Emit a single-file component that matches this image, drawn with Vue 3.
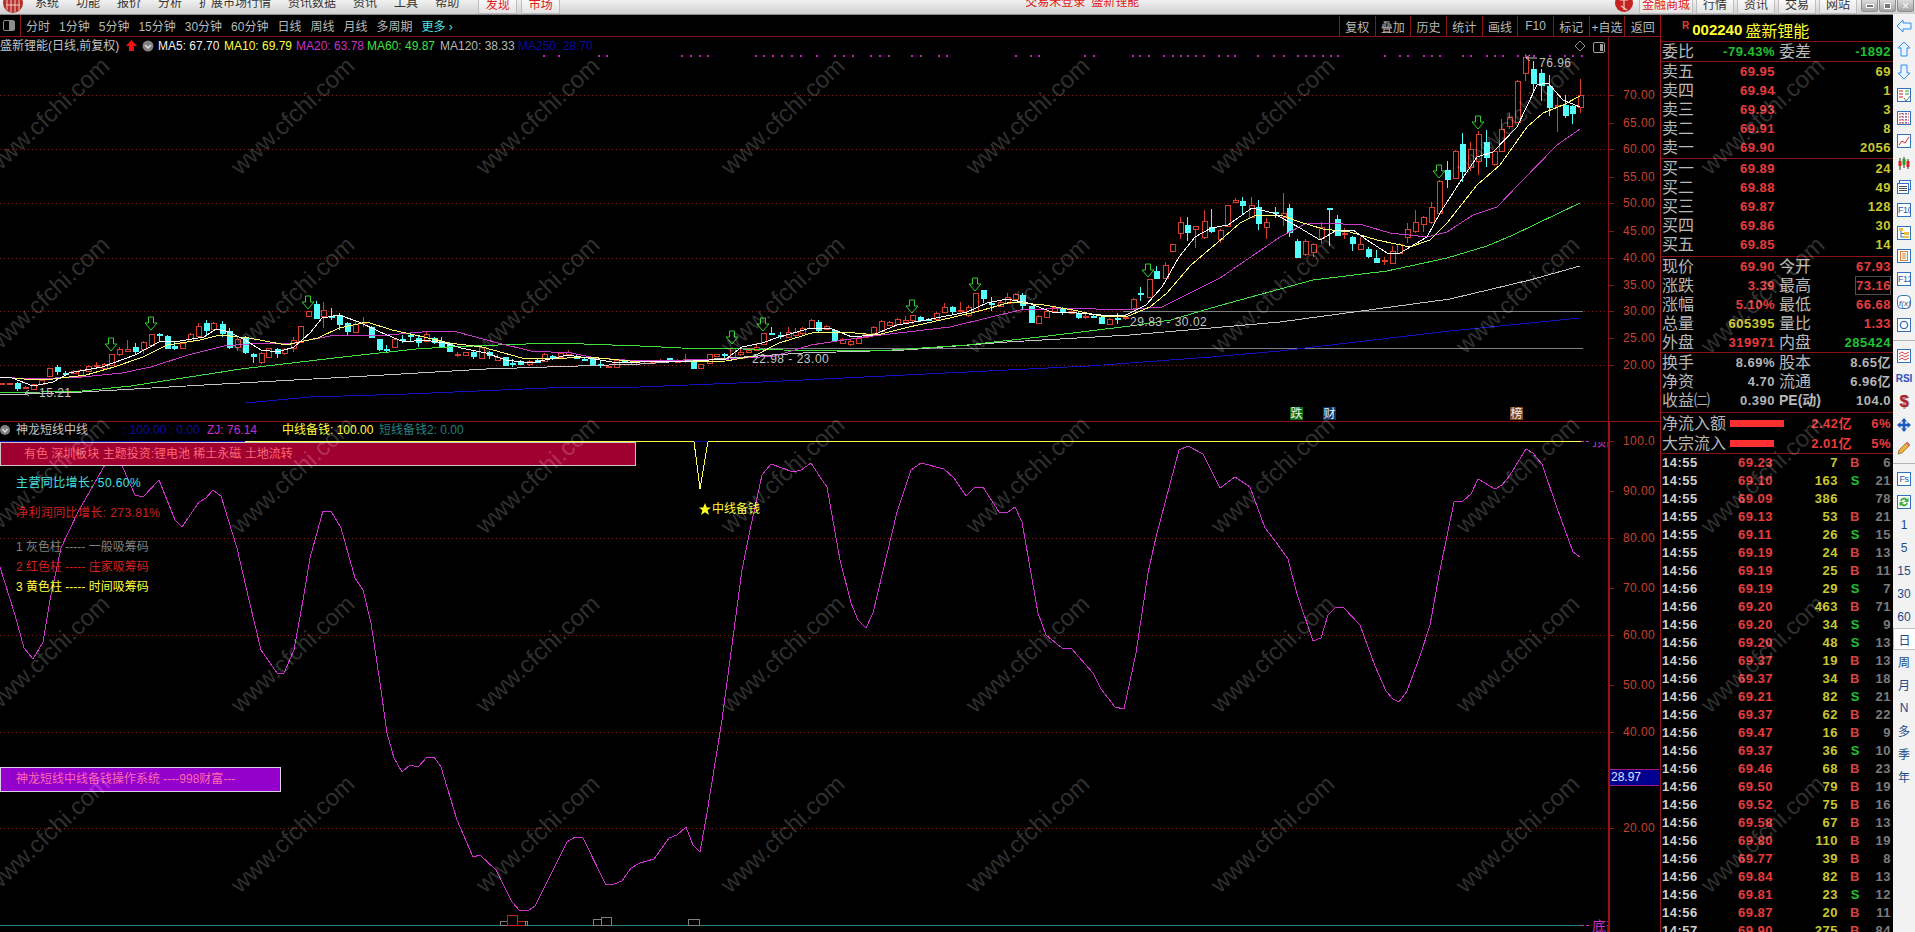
<script setup>
const menus = ['系统', '功能', '报价', '分析', '扩展市场行情', '资讯数据', '资讯', '工具', '帮助']
const tabs = ['分时', '1分钟', '5分钟', '15分钟', '30分钟', '60分钟', '日线', '周线', '月线', '多周期']
const tools = ['复权', '叠加', '历史', '统计', '画线', 'F10', '标记', '+自选', '返回']

const C = [[1,383,384,383,384,0],[9,383,384,383,384,0],[17,383,388,382,391,1],[25,387,388,386,389,0],[33,384,389,384,390,0],[41,380,384,379,385,0],[49,368,376,368,377,0],[57,367,371,365,375,1],[65,373,374,371,376,1],[73,371,373,370,374,0],[80,370,376,369,377,0],[88,366,371,365,372,0],[96,365,366,362,367,0],[104,364,368,363,369,0],[111,354,365,354,366,0],[119,349,354,347,356,0],[127,349,351,340,352,0],[135,347,351,343,355,1],[143,342,349,341,354,0],[151,334,345,334,346,0],[159,334,335,333,342,1],[167,336,348,335,349,1],[174,346,348,342,350,1],[182,343,348,342,349,0],[190,334,341,333,342,0],[198,326,336,323,338,0],[206,323,330,320,335,1],[213,323,329,322,331,0],[222,324,333,321,337,1],[229,331,347,328,349,1],[237,339,347,337,351,0],[245,337,352,336,354,1],[253,354,356,353,363,1],[261,353,362,352,364,0],[268,348,357,348,358,0],[277,349,353,348,358,1],[284,349,353,348,355,0],[293,340,348,337,352,0],[300,326,342,326,343,0],[308,311,316,311,316,0],[316,304,318,301,319,1],[323,310,316,302,328,0],[331,316,317,308,320,1],[339,315,324,313,330,1],[347,323,331,322,335,1],[355,324,332,321,333,0],[363,322,323,317,327,0],[371,327,337,326,338,1],[379,339,349,339,351,1],[386,349,350,345,352,1],[394,339,347,338,348,0],[402,339,340,335,343,1],[410,335,336,332,342,1],[418,338,342,335,347,1],[426,334,341,331,342,0],[434,338,342,337,344,1],[441,341,347,337,348,1],[449,343,351,342,352,1],[457,354,355,352,357,0],[465,352,355,352,356,0],[473,352,356,351,359,1],[481,347,358,346,359,0],[489,352,355,351,359,1],[497,357,360,354,361,0],[505,357,365,357,366,1],[512,363,364,359,367,1],[520,361,364,360,365,1],[529,361,364,360,366,0],[537,360,362,359,363,1],[544,354,361,353,362,0],[552,356,358,355,360,1],[560,353,357,352,358,0],[568,352,354,350,355,0],[576,357,358,355,359,1],[584,359,360,358,361,1],[592,358,365,357,366,1],[600,364,365,361,368,1],[608,366,367,365,368,0],[616,360,367,359,368,0],[624,361,362,360,363,1],[633,360,364,360,365,0],
[641,361,363,360,364,0],[652,362,363,361,364,0],[660,360,362,359,363,0],[669,358,361,358,362,1],[677,360,362,359,363,0],[685,359,360,354,363,0],[693,362,368,361,369,1],[700,364,368,364,369,0],[709,354,363,354,364,0],[716,354,356,354,357,0],[724,354,355,353,358,1],[732,348,357,348,358,0],[740,352,354,349,356,0],[748,350,352,348,353,0],[756,347,350,343,351,0],[763,333,344,333,345,0],[771,333,334,327,335,1],[780,335,336,332,339,1],[788,332,337,327,338,0],[795,332,335,328,338,0],[802,328,333,327,336,0],[811,320,328,319,329,0],[818,322,330,320,332,1],[826,326,329,325,330,0],[834,330,340,329,341,1],[842,339,343,338,344,0],[850,341,344,340,346,0],[858,338,343,337,344,0],[865,334,337,333,338,0],[873,327,333,326,334,0],[881,321,331,320,332,0],[889,322,325,321,326,0],[897,319,324,318,325,0],[905,320,322,316,324,0],[912,315,320,315,324,0],[920,317,320,316,322,1],[928,319,320,318,321,1],[936,313,319,312,320,0],[944,307,312,303,313,0],[952,307,311,306,315,1],[960,310,311,302,313,0],[968,307,315,305,317,0],[975,293,311,293,312,0],[983,290,298,290,303,1],[991,303,304,297,311,1],[1000,302,306,301,307,0],[1007,297,303,293,304,0],[1015,294,299,293,300,0],[1022,295,305,293,310,1],[1031,306,322,306,322,1],[1038,316,323,315,324,0],[1046,311,317,308,318,0],[1054,307,311,306,312,0],[1062,308,312,307,315,1],[1071,311,313,310,314,0],[1078,313,317,312,319,1],[1085,316,317,313,319,0],[1093,316,317,314,318,1],[1101,317,323,316,324,1],[1109,319,324,318,325,0],[1117,318,319,313,324,1],[1125,317,318,314,320,0],[1133,299,309,298,310,0],[1140,293,294,287,301,1],[1149,279,297,279,298,0],[1156,271,278,266,279,1],[1165,265,278,262,279,0],[1172,244,251,244,252,0],[1180,222,233,217,239,0],[1187,225,232,217,241,1],[1195,226,229,226,248,0],[1204,221,237,210,239,0],[1211,227,231,209,233,1],[1220,230,239,229,243,0],[1227,205,226,205,227,0],[1235,200,202,198,203,0],[1242,201,205,197,214,1],[1251,205,217,197,218,0],[1258,207,223,200,230,1],[1266,222,227,218,239,0],[1275,212,213,207,218,1],
[1283,213,217,193,226,0],[1289,208,232,204,237,1],[1297,241,257,239,258,1],[1305,241,254,239,256,0],[1313,244,252,243,257,0],[1321,227,238,222,244,0],[1329,208,209,208,246,1],[1337,219,235,215,236,1],[1344,233,234,228,239,0],[1352,237,243,236,251,1],[1360,244,249,237,250,0],[1368,249,256,247,258,1],[1376,258,262,250,263,1],[1384,260,261,257,265,0],[1392,251,263,246,264,0],[1399,244,253,243,254,0],[1407,229,237,223,243,0],[1415,222,231,210,233,0],[1423,217,224,216,232,0],[1431,207,222,202,224,0],[1439,181,213,180,214,0],[1447,170,179,161,188,1],[1455,151,178,150,179,0],[1462,144,171,133,182,1],[1470,149,167,142,171,0],[1478,134,161,131,175,0],[1486,142,157,130,167,1],[1494,151,164,150,166,0],[1501,129,151,119,152,0],[1509,117,126,113,129,0],[1517,81,122,80,123,0],[1525,57,73,54,81,0],[1533,69,83,61,92,1],[1541,73,85,69,101,1],[1549,86,107,75,116,1],[1557,105,106,97,132,0],[1565,105,115,95,118,1],[1572,106,113,105,124,1],[1580,95,107,79,113,0]]

const candles = C.map(([x, t, b, h, l, c]) => ({ x, t, b, h, l, c }))

const pts = a => a.map(p => p.join(',')).join(' ')
const maLines = [
  { cls: 'ma250', p: pts([[245,403],[310,397],[408,394],[547,388],[640,387],[762,382],[967,372],[1089,366],[1211,357],[1280,351],[1450,331],[1580,318]]) },
  { cls: 'ma120', p: pts([[0,395],[82,392],[204,385],[367,376],[486,369],[640,364],[803,353],[905,350],[1007,342],[1130,335],[1280,322],[1450,299],[1530,280],[1580,266]]) },
  { cls: 'ma60', p: pts([[0,393],[82,391],[131,386],[241,369],[343,357],[416,349],[449,347],[498,345],[555,343],[640,346],[681,348],[742,349],[783,350],[877,351],[967,345],[1048,336],[1130,326],[1171,320],[1211,308],[1280,289],[1313,280],[1387,271],[1447,258],[1487,246],[1513,235],[1580,203]]) },
  { cls: 'ma20', p: pts([[0,377],[29,379],[82,377],[122,373],[151,367],[188,355],[224,346],[261,343],[294,343],[335,335],[388,335],[433,331],[457,332],[498,343],[531,351],[571,353],[596,358],[640,361],[730,359],[775,356],[811,345],[864,337],[950,327],[1020,310],[1073,308],[1118,310],[1162,307],[1220,278],[1280,237],[1307,223],[1343,224],[1363,225],[1390,233],[1427,237],[1447,232],[1473,215],[1497,207],[1520,183],[1557,145],[1580,129]]) },
  { cls: 'ma10', p: pts([[0,377],[24,379],[53,379],[86,375],[114,367],[143,357],[167,345],[200,340],[220,335],[249,338],[286,345],[318,338],[339,328],[367,322],[392,330],[424,337],[449,343],[482,347],[522,358],[547,359],[588,357],[640,362],[726,361],[754,356],[779,343],[815,332],[844,332],[877,335],[909,327],[950,318],[983,310],[1011,302],[1044,305],[1073,310],[1101,316],[1126,317],[1150,307],[1167,293],[1191,265],[1224,237],[1240,223],[1256,215],[1280,215],[1300,222],[1323,229],[1350,232],[1377,240],[1410,247],[1430,240],[1447,223],[1477,185],[1500,165],[1527,127],[1543,113],[1563,105],[1580,96]]) },
  { cls: 'ma5', p: pts([[0,377],[12,378],[33,386],[53,382],[69,373],[102,367],[135,355],[159,342],[180,341],[204,337],[216,329],[229,332],[245,340],[261,350],[278,352],[294,347],[310,333],[322,318],[339,315],[359,322],[380,332],[404,342],[424,340],[445,343],[461,348],[486,353],[506,360],[531,363],[555,358],[567,355],[588,358],[612,362],[640,362],[693,361],[726,359],[742,347],[762,343],[779,337],[811,328],[832,329],[852,337],[873,335],[897,325],[926,320],[967,312],[987,303],[1007,299],[1028,303],[1052,312],[1077,313],[1101,315],[1126,315],[1146,305],[1162,287],[1179,257],[1195,237],[1211,228],[1228,225],[1252,208],[1273,213],[1300,228],[1320,240],[1337,230],[1353,230],[1367,240],[1387,253],[1400,253],[1427,237],[1440,213],[1460,182],[1477,157],[1493,152],[1517,127],[1537,85],[1548,83],[1563,100],[1580,107]]) },
]
const zj = pts([[0,567],[15,615],[24,648],[33,659],[43,642],[50,600],[61,548],[78,512],[106,463],[110,461],[120,461],[135,495],[143,497],[159,480],[175,520],[182,527],[199,502],[206,498],[213,490],[221,496],[237,548],[249,600],[261,650],[277,673],[284,673],[294,650],[303,600],[310,558],[323,511],[331,511],[341,528],[355,578],[363,590],[371,623],[380,683],[387,733],[394,758],[402,772],[410,765],[418,767],[427,757],[434,757],[441,767],[457,820],[473,857],[480,855],[496,870],[512,902],[520,911],[529,910],[535,906],[567,842],[575,837],[583,838],[606,885],[614,884],[622,881],[631,868],[640,863],[654,859],[669,838],[677,835],[686,827],[693,845],[700,852],[707,813],[722,720],[742,570],[750,530],[762,475],[771,464],[793,472],[801,470],[811,463],[820,477],[827,487],[840,560],[851,603],[858,620],[866,628],[873,613],[897,512],[911,470],[921,463],[944,469],[954,478],[966,496],[975,487],[983,487],[999,512],[1007,513],[1015,507],[1022,522],[1038,613],[1046,635],[1062,648],[1071,648],[1093,673],[1101,689],[1115,707],[1124,709],[1136,653],[1148,573],[1156,537],[1179,450],[1188,446],[1203,454],[1220,488],[1235,477],[1250,487],[1265,528],[1273,538],[1288,559],[1297,594],[1313,641],[1321,638],[1328,615],[1335,608],[1343,607],[1360,625],[1375,666],[1386,691],[1393,699],[1399,702],[1407,691],[1420,656],[1430,625],[1440,570],[1454,502],[1463,501],[1471,494],[1478,479],[1495,489],[1502,485],[1510,475],[1526,449],[1533,453],[1542,464],[1557,508],[1573,552],[1580,557]])
const notch = pts([[245,441.5],[694,441.5],[700,489],[708,441.5],[1581,441.5]])

const arrows = [[111,345],[151,324],[308,303],[732,338],[763,325],[912,307],[975,285],[1148,271],[1439,172],[1478,123]]
const dots = [543,558,598,606,681,690,699,707,755,763,772,781,791,800,816,834,843,852,870,879,888,911,920,938,946,1015,1030,1038,1084,1093,1132,1139,1148,1163,1172,1180,1187,1195,1203,1218,1227,1234,1257,1273,1283,1297,1305,1313,1322,1330,1337,1384,1399,1407,1423,1431,1439,1462,1470,1486,1494,1502,1517,1525,1533,1549,1564,1572,1581]
const grid1 = [95, 149, 203, 258, 311, 365]
const grid2 = [538, 635, 732, 828]
const axis1 = [[95,'70.00'],[123,'65.00'],[149,'60.00'],[177,'55.00'],[203,'50.00'],[231,'45.00'],[258,'40.00'],[285,'35.00'],[311,'30.00'],[338,'25.00'],[365,'20.00']]
const axis2 = [[441,'100.0'],[491,'90.00'],[538,'80.00'],[588,'70.00'],[635,'60.00'],[685,'50.00'],[732,'40.00'],[828,'20.00']]
const legends = [
  { x: 158, cls: 'white', t: 'MA5: 67.70' },
  { x: 224, cls: 'yellow', t: 'MA10: 69.79' },
  { x: 296, cls: 'magenta', t: 'MA20: 63.78' },
  { x: 367, cls: 'green', t: 'MA60: 49.87' },
  { x: 440, cls: 'grey', t: 'MA120: 38.33' },
  { x: 518, cls: 'blue', t: 'MA250: 28.70' },
]
const notes = [
  { y: 483, cls: 'cyan wide', t: '主营同比增长:  50.60%' },
  { y: 513, cls: 'red wide', t: '净利润同比增长:  273.81%' },
  { y: 547, cls: 'dim', t: '1 灰色柱 ----- 一般吸筹码' },
  { y: 567, cls: 'red', t: '2 红色柱 -----  庄家吸筹码' },
  { y: 587, cls: 'yellow', t: '3 黄色柱 -----  时间吸筹码' },
]
const volBars = [[500,7,4,'grey'],[507,10,10,'red'],[517,8,4,'red'],[525,2,4,'grey'],[593,8,6,'grey'],[601,10,8,'grey'],[688,11,6,'grey']]
const marks = [[1290,'跌','m-green'],[1323,'财','m-blue'],[1510,'榜','m-brown']]

const sell = [['卖五','69.95','69'],['卖四','69.94','1'],['卖三','69.93','3'],['卖二','69.91','8'],['卖一','69.90','2056']]
const buy = [['买一','69.89','24'],['买二','69.88','49'],['买三','69.87','128'],['买四','69.86','30'],['买五','69.85','14']]
const quote = [
  ['现价','69.90','red','今开','67.93','red',false],
  ['涨跌','3.39','red','最高','73.16','red',true],
  ['涨幅','5.10%','red','最低','66.68','red',false],
  ['总量','605395','yel','量比','1.33','red',false],
  ['外盘','319971','red','内盘','285424','grn',false],
]
const stats = [['换手','8.69%','股本','8.65亿'],['净资','4.70','流通','6.96亿'],['收益㈡','0.390','PE(动)','104.0']]
const flows = [['净流入额',54,'2.42亿','6%'],['大宗流入',44,'2.01亿','5%']]
const trades = [['14:55','69.23','7','B','6'],['14:55','69.10','163','S','21'],['14:55','69.09','386','','78'],['14:55','69.13','53','B','21'],['14:55','69.11','26','S','15'],['14:55','69.19','24','B','13'],['14:56','69.19','25','B','11'],['14:56','69.19','29','S','7'],['14:56','69.20','463','B','71'],['14:56','69.20','34','S','9'],['14:56','69.20','48','S','13'],['14:56','69.37','19','B','13'],['14:56','69.37','34','B','18'],['14:56','69.21','82','S','21'],['14:56','69.37','62','B','22'],['14:56','69.47','16','B','9'],['14:56','69.37','36','S','10'],['14:56','69.46','68','B','23'],['14:56','69.50','79','B','19'],['14:56','69.52','75','B','16'],['14:56','69.58','67','B','13'],['14:56','69.80','110','B','19'],['14:56','69.77','39','B','8'],['14:56','69.84','82','B','13'],['14:56','69.81','23','S','12'],['14:56','69.87','20','B','11'],['14:57','69.90','275','B','84']]
const periods = ['1','5','15','30','60','日','周','月','N','多','季','年']

const marks2 = []
for (const cx of [-5, 240, 485, 730, 975, 1220, 1465, 1710]) {
  for (const cy of [176, 355, 535, 714, 894]) marks2.push([cx, cy])
}
</script>

<template>
  <div class="app">
    <header class="topbar">
      <svg class="logo" width="24" height="15" viewBox="0 0 24 15">
        <circle cx="12" cy="3" r="10" fill="#b8302c" />
        <path d="M6 -2V10M10 -2V12M14 -2V12M18 -2V10M5 5H19" stroke="#f0c8c0" stroke-width="1" fill="none" />
      </svg>
      <nav class="menus">
        <span v-for="m in menus" :key="m">{{ m }}</span>
      </nav>
      <span class="tbtn red first">发现</span>
      <span class="tbtn red">市场</span>
      <span class="status"><span>交易未登录</span><span>盛新锂能</span></span>
      <div class="topright">
        <svg width="18" height="14" viewBox="0 0 18 14">
          <circle cx="9" cy="3" r="9" fill="#c42420" />
          <path d="M5 0H13M9 -2V10M6 6L12 10" stroke="#f4d0c8" stroke-width="1.2" fill="none" />
        </svg>
        <span class="tbtn red mall">金融商城</span>
        <span class="tbtn">行情</span>
        <span class="tbtn">资讯</span>
        <span class="tbtn">交易</span>
        <span class="tbtn">网站</span>
        <div class="winbtns">
          <span class="win"><i class="w-min"></i></span>
          <span class="win"><i class="w-max"></i></span>
          <span class="win"><i class="w-x">×</i></span>
        </div>
      </div>
    </header>

    <div class="body">
      <section class="left">
        <div class="toolbar">
          <div class="toggle"><i></i></div>
          <div class="tabs">
            <span v-for="t in tabs" :key="t">{{ t }}</span>
            <span class="more">更多 ›</span>
          </div>
          <div class="tools">
            <span v-for="t in tools" :key="t">{{ t }}</span>
          </div>
        </div>

        <svg class="plot" width="1660" height="895" viewBox="0 37 1660 895">
          <g shape-rendering="crispEdges">
            <line v-for="y in grid1" :key="'g' + y" x1="0" x2="1609" :y1="y + 0.5" :y2="y + 0.5" class="dotgrid" />
            <line v-for="y in grid2" :key="'h' + y" x1="0" x2="1609" :y1="y + 0.5" :y2="y + 0.5" class="dotgrid" />
            <line x1="1123" x2="1583" y1="311.5" y2="311.5" class="flat" />
            <line x1="720" x2="1583" y1="348.5" y2="348.5" class="flat" />
          </g>

          <rect v-for="d in dots" :key="'d' + d" :x="d" y="55" width="2" height="2" class="dot" />

          <g shape-rendering="crispEdges">
            <g v-for="c in candles" :key="c.x">
              <line :x1="c.x + 0.5" :x2="c.x + 0.5" :y1="c.h" :y2="c.l" :class="c.c ? 'wick-c' : 'wick-r'" />
              <rect :x="c.x - 2" :y="c.t + 0.5" width="5" :height="Math.max(c.b - c.t, 0.5)" :class="c.c ? 'body-c' : 'body-r'" />
            </g>
          </g>

          <polyline v-for="m in maLines" :key="m.cls" :points="m.p" :class="['ma', m.cls]" />

          <path v-for="a in arrows" :key="'a' + a[0]" :transform="`translate(${a[0]} ${a[1]})`" d="M-2.5 -7H2.5V-1H6L0 6L-6 -1H-2.5Z" class="arrow" />

          <text x="0" y="46" class="t12 txt grey2">盛新锂能(日线,前复权)</text>
          <path d="M131.5 40L137 46H134V51H129V46H126Z" fill="#f01010" />
          <circle cx="148" cy="46" r="5.5" fill="#808080" />
          <path d="M145 45L148 48L151 45" stroke="#e0e0e0" stroke-width="1.4" fill="none" />
          <text v-for="l in legends" :key="l.x" :x="l.x" y="46" :class="['t12', 'txt', l.cls]">{{ l.t }}</text>

          <path d="M1580 41L1585 46L1580 51L1575 46Z" class="dia" />
          <rect x="1593.5" y="42.5" width="11" height="10" rx="1.5" class="tog" />
          <rect x="1600" y="44" width="3" height="7" fill="#a0a0a0" />

          <path d="M1526 58L1530 55M1526 58L1530 61M1526 58H1537" class="lbl-arrow" />
          <text x="1539" y="63" class="t12 txt grey2 spc">76.96</text>
          <path d="M25 393L29 390M25 393L29 396M25 393H37" class="lbl-arrow" />
          <text x="39" y="393" class="t12 txt grey2 spc">15.21</text>
          <text x="752" y="359" class="t12 txt grey2 spc">22.98 - 23.00</text>
          <text x="1130" y="322" class="t12 txt grey2 spc">29.83 - 30.02</text>

          <g v-for="m in marks" :key="m[1]">
            <rect :x="m[0]" y="407" width="13" height="13" :class="m[2]" />
            <text :x="m[0] + 0.5" y="414" class="t12 txt white">{{ m[1] }}</text>
          </g>

          <g shape-rendering="crispEdges">
            <line x1="0" x2="1660" y1="421.5" y2="421.5" class="rule" />
            <line x1="1608.5" x2="1608.5" y1="37" y2="421" class="rule" />
          </g>

          <circle cx="5" cy="430" r="5" fill="#808080" />
          <path d="M2.5 429L5 432L7.5 429" stroke="#e0e0e0" stroke-width="1.3" fill="none" />
          <text x="16" y="430" class="t12 txt grey2">神龙短线中线</text>
          <text x="123" y="430" class="t12 txt blue">: 100.00 : 0.00</text>
          <text x="207" y="430" class="t12 txt magenta">ZJ: 76.14</text>
          <text x="282" y="430" class="t12 txt yellow">中线备钱: 100.00</text>
          <text x="379" y="430" class="t12 txt teal">短线备钱2: 0.00</text>

          <polyline :points="zj" class="zj" />
          <polyline :points="notch" class="notch" />
          <g shape-rendering="crispEdges">
            <line x1="0" x2="245" y1="441.5" y2="441.5" class="bluel" />
            <line x1="694" x2="708" y1="441.5" y2="441.5" class="bluel" />
            <line x1="0" x2="1581" y1="925.5" y2="925.5" class="tealline" />
          </g>

          <rect x="0.5" y="442.5" width="635" height="23" class="box-red" />
          <text x="24" y="454" class="t12 txt pink">有色 深圳板块 主题投资:锂电池 稀土永磁 土地流转</text>
          <text v-for="n in notes" :key="n.y" x="16" :y="n.y" :class="['t12', 'txt', n.cls]">{{ n.t }}</text>
          <path d="M705 503L706.8 507.5H711L707.6 510.3L709 515L705 512.2L701 515L702.4 510.3L699 507.5H703.2Z" fill="#ffff20" />
          <text x="712" y="509" class="t12 txt yellow">中线备钱</text>
          <rect x="0.5" y="767.5" width="280" height="24" class="box-purple" />
          <text x="16" y="779" class="t12 txt pink2">神龙短线中线备钱操作系统 ----998财富---</text>

          <g shape-rendering="crispEdges">
            <rect v-for="v in volBars" :key="v[0]" :x="v[0] + 0.5" :y="925 - v[2]" :width="v[1]" :height="v[2]" :class="'vb-' + v[3]" />
          </g>

          <text x="1592" y="441" class="t14 txt magenta">顶部</text>
          <rect x="1589" y="423" width="20" height="19" fill="#000" />
          <line x1="1581" x2="1590" y1="441.5" y2="441.5" class="dash" />
          <line x1="1581" x2="1590" y1="925.5" y2="925.5" class="dash" />
          <text x="1592" y="926" class="t14 txt magenta">底部</text>

          <rect x="1610" y="422" width="50" height="510" fill="#000" />
          <g shape-rendering="crispEdges">
            <line x1="1609" x2="1609" y1="421" y2="932" class="rule2" />
            <line v-for="a in axis1" :key="'t' + a[0]" x1="1609" x2="1614" :y1="a[0] + 0.5" :y2="a[0] + 0.5" class="rule" />
            <line v-for="a in axis2" :key="'u' + a[0]" x1="1609" x2="1614" :y1="a[0] + 0.5" :y2="a[0] + 0.5" class="rule" />
          </g>
          <text v-for="a in axis1" :key="'v' + a[0]" x="1623" :y="a[0]" class="t12 txt axis">{{ a[1] }}</text>
          <text v-for="a in axis2" :key="'w' + a[0]" x="1623" :y="a[0]" class="t12 txt axis">{{ a[1] }}</text>

          <rect x="1610" y="770" width="49" height="15" class="cross" />
          <line x1="1610" x2="1659" y1="769.5" y2="769.5" class="crossb" />
          <line x1="1610" x2="1659" y1="785.5" y2="785.5" class="crossb" />
          <text x="1611" y="777" class="t12 txt crosst">28.97</text>
        </svg>
      </section>

      <aside class="panel">
        <div class="p-head">
          <span class="r">R</span>
          <span class="code">002240</span>
          <span class="sname">盛新锂能</span>
        </div>
        <div class="p-row ratio sec">
          <span class="lab">委比</span>
          <span class="val grn">-79.43%</span>
          <span class="lab lab2">委差</span>
          <span class="val grn">-1892</span>
        </div>
        <div class="sec depth">
          <div v-for="r in sell" :key="r[0]" class="d-row">
            <span class="lab">{{ r[0] }}</span>
            <span class="val red">{{ r[1] }}</span>
            <span class="val yel">{{ r[2] }}</span>
          </div>
        </div>
        <div class="sec depth">
          <div v-for="r in buy" :key="r[0]" class="d-row">
            <span class="lab">{{ r[0] }}</span>
            <span class="val red">{{ r[1] }}</span>
            <span class="val yel">{{ r[2] }}</span>
          </div>
        </div>
        <div class="sec quote">
          <div v-for="r in quote" :key="r[0]" class="p-row">
            <span class="lab">{{ r[0] }}</span>
            <span :class="['val', r[2]]">{{ r[1] }}</span>
            <span class="lab lab2">{{ r[3] }}</span>
            <span :class="['val', r[5], { boxed: r[6] }]">{{ r[4] }}</span>
          </div>
        </div>
        <div class="sec stats">
          <div v-for="r in stats" :key="r[0]" class="p-row">
            <span class="lab nowrap">{{ r[0] }}</span>
            <span class="val gry">{{ r[1] }}</span>
            <span :class="['lab', 'lab2', 'nowrap', { pe: r[2].startsWith('PE') }]">{{ r[2] }}</span>
            <span class="val gry">{{ r[3] }}</span>
          </div>
        </div>
        <div class="sec flows">
          <div v-for="f in flows" :key="f[0]" class="f-row">
            <span class="lab f-lab">{{ f[0] }}</span>
            <span class="f-track"><i class="bar" :style="{ width: f[1] + 'px' }"></i></span>
            <span class="val red f-v">{{ f[2] }}</span>
            <span class="val red f-p">{{ f[3] }}</span>
          </div>
        </div>
        <div class="trades">
          <div v-for="(t, i) in trades" :key="i" class="t-row">
            <span class="val tm">{{ t[0] }}</span>
            <span class="val red tp">{{ t[1] }}</span>
            <span class="val yel tv">{{ t[2] }}</span>
            <span :class="['val', 'tf', t[3] === 'B' ? 'fb' : 'grn']">{{ t[3] }}</span>
            <span class="val tc">{{ t[4] }}</span>
          </div>
        </div>
      </aside>

      <aside class="strip">
        <div class="ic"><svg viewBox="0 0 16 16"><path d="M1 8L7 2V5H15V11H7V14Z" class="ar" /></svg></div>
        <div class="ic"><svg viewBox="0 0 16 16"><path d="M8 1L14 7H11V15H5V7H2Z" class="ar" /></svg></div>
        <div class="ic"><svg viewBox="0 0 16 16"><path d="M8 15L14 9H11V1H5V9H2Z" class="ar" /></svg></div>
        <div class="ic"><svg viewBox="0 0 16 16"><rect x="1.5" y="1.5" width="13" height="13" class="bx" /><path d="M3 4H7M3 7H7M3 10H7" stroke="#d02020" /><path d="M9 4H13M9 7H13" stroke="#20a020" /><path d="M8 11L10 14L15 8" stroke="#707070" fill="none" /></svg></div>
        <div class="ic"><svg viewBox="0 0 16 16"><rect x="1.5" y="1.5" width="13" height="13" class="bx" /><path d="M3 4H13M3 7H13M3 10H13M3 13H13" stroke="#d02020" stroke-dasharray="2 1" /><path d="M6 3V14M10 3V14" stroke="#2040c0" stroke-dasharray="1 2" /></svg></div>
        <div class="ic"><svg viewBox="0 0 16 16"><rect x="1.5" y="1.5" width="13" height="13" class="bx" /><path d="M3 12L6 8L9 10L13 4" stroke="#e02020" fill="none" /></svg></div>
        <div class="ic"><svg viewBox="0 0 16 16"><path d="M4 2V14M8 1V12M12 3V13" stroke="#303030" /><rect x="2.5" y="5" width="3" height="5" fill="#e02020" /><rect x="6.5" y="3" width="3" height="6" fill="#20a020" /><rect x="10.5" y="5" width="3" height="6" fill="#e02020" /></svg></div>
        <div class="ic"><svg viewBox="0 0 16 16"><rect x="3.5" y="1.5" width="11" height="9" class="bx" /><rect x="1.5" y="4.5" width="11" height="10" class="bx" /><path d="M3 7.5H11M3 9.5H11M3 11.5H11" stroke="#505050" /></svg></div>
        <div class="ic"><span class="itxt">F10</span></div>
        <div class="ic"><svg viewBox="0 0 16 16"><rect x="1.5" y="1.5" width="13" height="13" class="bx" /><rect x="3" y="3" width="4" height="3" fill="#e8c040" /><rect x="8" y="7" width="5" height="3" fill="#e8c040" /><rect x="8" y="11" width="5" height="2" fill="#e8c040" /><path d="M5 6V12H8M5 8.5H8" stroke="#3070c0" fill="none" /></svg></div>
        <div class="ic"><svg viewBox="0 0 16 16"><rect x="1.5" y="1.5" width="13" height="13" class="bx" /><rect x="4.5" y="3.5" width="7" height="9" fill="#fff" stroke="#e08030" /><path d="M6 6H10M6 8H10M6 10H10" stroke="#e08030" /></svg></div>
        <div class="ic"><span class="itxt">F12</span></div>
        <div class="ic"><svg viewBox="0 0 16 16"><rect x="1.5" y="1.5" width="13" height="13" rx="4" class="bx" /><text x="3" y="12" class="fx">f(x)</text></svg></div>
        <div class="ic"><svg viewBox="0 0 16 16"><rect x="1.5" y="1.5" width="13" height="13" class="bx" /><circle cx="8" cy="8" r="3.6" fill="none" stroke="#3070c0" stroke-width="1.3" /></svg></div>
        <div class="sep"></div>
        <div class="ic"><svg viewBox="0 0 16 16"><rect x="1.5" y="1.5" width="13" height="13" class="bx" /><path d="M3 6L6 4L9 6L13 4M3 9L6 7L9 9L13 7M3 12L6 10L9 12L13 10" stroke="#d04040" fill="none" /></svg></div>
        <div class="ic"><span class="rsi">RSI</span></div>
        <div class="ic"><span class="dollar">$</span></div>
        <div class="ic"><svg viewBox="0 0 16 16"><path d="M8 1L11 4.5H9.3V6.7H11.5V5L15 8L11.5 11V9.3H9.3V11.5H11L8 15L5 11.5H6.7V9.3H4.5V11L1 8L4.5 5V6.7H6.7V4.5H5Z" fill="#1a5ac0" /></svg></div>
        <div class="ic"><svg viewBox="0 0 16 16"><path d="M2 14L3 10L11 2L14 5L6 13Z" fill="#f0b040" stroke="#907040" stroke-width=".8" /><path d="M11 2L14 5L12.6 6.4L9.6 3.4Z" fill="#e07070" /></svg></div>
        <div class="sep sep2"></div>
        <div class="ic"><span class="itxt">Fs</span></div>
        <div class="ic"><svg viewBox="0 0 16 16"><rect x="1.5" y="1.5" width="13" height="13" class="bx" /><path d="M4 7A4 4 0 0 1 11 5L12.5 3.5V8H8L9.6 6.4A2.4 2.4 0 0 0 5.5 7.5ZM12 9A4 4 0 0 1 5 11L3.5 12.5V8H8L6.4 9.6A2.4 2.4 0 0 0 10.5 8.5Z" fill="#40b040" /></svg></div>
        <div v-for="p in periods" :key="p" :class="['per', { sel: p === '日' }]">{{ p }}</div>
      </aside>

      <svg class="wm" width="1915" height="917" viewBox="0 15 1915 917">
        <text v-for="m in marks2" :key="m[0] + '-' + m[1]" :transform="`translate(${m[0]} ${m[1]}) rotate(-43)`" class="wmt">www.cfchi.com</text>
      </svg>
    </div>
  </div>
</template>

<style>
html, body { margin: 0; background: #000; overflow: hidden; }
</style>

<style scoped>
.app {
  width: 1915px;
  height: 932px;
  overflow: hidden;
  background: #000;
  display: flex;
  flex-direction: column;
  font-family: "Liberation Sans", "Noto Sans CJK SC", sans-serif;
}
.topbar {
  height: 14px;
  flex: none;
  display: flex;
  align-items: flex-start;
  overflow: hidden;
  background: linear-gradient(#f2f2f2, #cfcfcf);
  border-bottom: 1px solid #8a8a8a;
  font-size: 12px;
  line-height: 12px;
  color: #333;
}
.logo { margin-left: 1px; flex: none; }
.menus { display: flex; gap: 17px; margin: -3px 0 0 10px; }
.tbtn {
  height: 14px;
  box-sizing: border-box;
  background: linear-gradient(#fafafa, #e2e2e2);
  border: 1px solid #bdbdbd;
  border-top: 0;
  text-align: center;
  display: block;
  line-height: 10px;
  width: 39px;
  color: #333;
}
.tbtn.red { color: #e01818; }
.first { margin-left: 19px; }
.tbtn + .tbtn { margin-left: 4px; }
.status { display: flex; gap: 6px; margin: -4px 0 0 465px; color: #e01818; }
.topright { margin-left: auto; display: flex; align-items: flex-start; padding-right: 1px; }
.topright svg { margin-right: 6px; }
.topright .tbtn { width: 38px; }
.topright .tbtn + .tbtn { margin-left: 3px; }
.topright .mall { width: 54px; }
.winbtns { display: flex; gap: 1px; margin-left: 4px; }
.win {
  width: 17px;
  height: 12px;
  box-sizing: border-box;
  border: 1px solid #8e8e8e;
  border-top: 0;
  border-radius: 0 0 3px 3px;
  background: linear-gradient(#dcdcdc, #a4a4a4);
  display: flex;
  align-items: center;
  justify-content: center;
}
.w-min { width: 8px; height: 4px; box-sizing: border-box; border: 1px solid #fff; background: #777; }
.w-max { width: 7px; height: 6px; box-sizing: border-box; border: 1px solid #fff; background: #777; }
.w-x { font-style: normal; color: #fff; font-size: 12px; line-height: 10px; }

.body { flex: 1; display: flex; position: relative; min-height: 0; }
.left { width: 1660px; flex: none; display: flex; flex-direction: column; }
.toolbar {
  height: 21px;
  flex: none;
  box-sizing: content-box;
  border-bottom: 1px solid #8a1414;
  display: flex;
  align-items: stretch;
  font-size: 12px;
  color: #b8b8b8;
}
.toggle {
  border-right: 1px solid #8a1414;
  display: flex;
  align-items: center;
  padding-left: 3px;
  box-sizing: content-box;
  width: 17px;
}
.toggle i {
  width: 10px;
  height: 9px;
  border: 1px solid #8c8c8c;
  border-radius: 2px;
  background: linear-gradient(90deg, #000 55%, #8c8c8c 55%);
}
.tabs { display: flex; align-items: center; gap: 9px; margin-left: 5px; }
.more { color: #50e0e8; }
.tools { margin-left: auto; display: flex; height: 20px; align-self: flex-end; }
.tools span {
  width: 34.7px;
  border-left: 1px solid #8a1414;
  display: flex;
  align-items: center;
  justify-content: center;
  white-space: nowrap;
}

.plot { display: block; flex: none; }
.dotgrid { stroke: #8a2020; stroke-dasharray: 1 3; stroke-width: 1; }
.flat { stroke: #808080; stroke-width: 1; }
.dot { fill: #c020c0; }
.wick-r { stroke: #d8402c; stroke-width: 1; }
.wick-c { stroke: #54fcfc; stroke-width: 1; }
.body-r { fill: #000; stroke: #d8402c; stroke-width: 1; }
.body-c { fill: #54fcfc; stroke: #54fcfc; stroke-width: 1; }
.ma { fill: none; stroke-width: 1; shape-rendering: crispEdges; }
.ma5 { stroke: #fff; }
.ma10 { stroke: #ffff70; }
.ma20 { stroke: #c63cc6; }
.ma60 { stroke: #40e040; }
.ma120 { stroke: #c4c4c4; }
.ma250 { stroke: #1010c0; }
.arrow { fill: none; stroke: #30d030; stroke-width: 1; }
.t12, .t14 { font-family: "Liberation Sans", "Noto Sans CJK SC", sans-serif; dominant-baseline: central; }
.t12 { font-size: 12px; }
.t14 { font-size: 14px; }
.spc { letter-spacing: 0.5px; }
.wide { letter-spacing: 0.4px; }
.txt { stroke: none; }
.white { fill: #f0f0f0; }
.grey2 { fill: #c4c4c4; }
.grey { fill: #b8b8b8; }
.yellow { fill: #ffff40; }
.magenta { fill: #c830c8; }
.green { fill: #40e040; }
.blue { fill: #0c0ca0; }
.teal { fill: #208080; }
.cyan { fill: #40e0e0; }
.red { fill: #d02020; }
.dim { fill: #808080; }
.pink { fill: #ff6878; }
.pink2 { fill: #ff68b0; }
.axis { fill: #c84030; letter-spacing: 0.4px; }
.dia { fill: none; stroke: #909090; }
.tog { fill: #000; stroke: #a0a0a0; }
.lbl-arrow { fill: none; stroke: #c0c0c0; }
.m-green { fill: #0c7010; }
.m-blue { fill: #0c3464; }
.m-brown { fill: #84481c; }
.rule { stroke: #8a1414; stroke-width: 1; }
.rule2 { stroke: #a01010; stroke-width: 2; }
.zj { fill: none; stroke: #d030d0; stroke-width: 1; shape-rendering: crispEdges; }
.notch { fill: none; stroke: #ffff50; stroke-width: 1; shape-rendering: crispEdges; }
.bluel { stroke: #0c0cb0; stroke-width: 1; }
.tealline { stroke: #208080; stroke-width: 1; }
.dash { stroke: #c830c8; stroke-dasharray: 3 2; }
.box-red { fill: #a00030; stroke: #d0c4c4; }
.box-purple { fill: #9400cc; stroke: #e0d0e8; }
.vb-grey { fill: none; stroke: #808080; }
.vb-red { fill: none; stroke: #c02020; }
.cross { fill: #000090; }
.crossb { stroke: #a01880; }
.crosst { fill: #e0e0ff; }

.panel {
  width: 232px;
  flex: none;
  box-sizing: content-box;
  border-left: 1px solid #a01010;
  overflow: hidden;
  color: #bcbcbc;
  font-size: 13px;
}
.p-head {
  height: 27px;
  box-sizing: border-box;
  display: flex;
  align-items: center;
  padding: 2px 0 0 21px;
  box-shadow: inset 0 -1px 0 #8a1414;
}
.r { color: #e04030; font-size: 10px; font-weight: bold; margin: -8px 3px 0 0; }
.code { color: #ffff30; font-weight: bold; font-size: 15px; }
.sname { color: #ffff30; font-size: 16px; margin-left: 3px; }
.sec { border-bottom: 1px solid #8a1414; }
.lab { font-size: 16px; color: #b8b8b8; line-height: 19px; }
.val { font-weight: bold; font-size: 13px; letter-spacing: 0.5px; text-align: right; line-height: 19px; }
.red { color: #e83c3c; }
.yel { color: #c8c830; }
.grn { color: #20c030; }
.gry { color: #b4b4b4; }
.p-row {
  display: grid;
  grid-template-columns: 34px 79px 38px 78px;
  height: 19px;
  padding-left: 1px;
}
.p-row .lab2 { padding-left: 4px; }
.nowrap { white-space: nowrap; }
.pe { font-size: 14px; font-weight: bold; color: #b8b8b8; }
.ratio { height: 19px; padding-top: 0; }
.depth { padding-bottom: 1px; }
.depth + .depth { padding-bottom: 2px; }
.d-row {
  display: grid;
  grid-template-columns: 34px 79px 116px;
  height: 19px;
  padding-left: 1px;
}
.boxed { outline: 1px solid #505050; outline-offset: -1px; margin-left: 42px; }
.stats { padding-bottom: 2px; }
.flows { height: 40px; }
.f-row { display: flex; align-items: center; height: 20px; padding-left: 1px; }
.f-lab { width: 68px; white-space: nowrap; flex: none; }
.f-track { width: 76px; flex: none; display: block; }
.bar { display: block; height: 7px; background: #ff3030; }
.f-v { width: 46px; flex: none; white-space: nowrap; }
.f-p { width: 39px; flex: none; }
.trades { height: 480px; overflow: hidden; }
.t-row {
  display: grid;
  grid-template-columns: 76px 40px 60px 22px 31px;
  height: 18px;
  padding-left: 1px;
}
.t-row .val { line-height: 18px; }
.tm { text-align: left; color: #d0d0d0; }
.tp { text-align: left; }
.tf { text-align: right; }
.fb { color: #d84040; }
.tc { color: #7c7c7c; }

.strip {
  width: 22px;
  flex: none;
  background: #f2f2f2;
  display: flex;
  flex-direction: column;
  overflow: hidden;
  margin-top: -1px;
}
.ic { height: 23px; flex: none; display: flex; align-items: center; justify-content: center; }
.ic svg { width: 16px; height: 16px; display: block; }
.ar { fill: #eaf4ff; stroke: #2e90e8; stroke-width: 1; }
.bx { fill: #fff; stroke: #3070c0; stroke-width: 1; }
.itxt {
  width: 14px;
  height: 14px;
  box-sizing: border-box;
  border: 1px solid #3070c0;
  background: #fff;
  color: #1a5ab0;
  font-size: 9px;
  line-height: 12px;
  text-align: center;
  letter-spacing: -0.4px;
  white-space: nowrap;
  overflow: hidden;
}
.fx { font-size: 8px; font-style: italic; fill: #2a4a80; }
.rsi { color: #2a50c0; font-weight: bold; font-size: 10px; }
.dollar { color: #b02020; font-weight: bold; font-size: 16px; text-shadow: 1px 0 #909090; }
.sep { height: 1px; background: #b4b4b4; margin: 4px 0 3px; flex: none; }
.per {
  height: 23px;
  flex: none;
  display: flex;
  align-items: center;
  justify-content: center;
  color: #1c4a8c;
  font-size: 12px;
}
.per.sel {
  background: #fff;
  border: 1px solid #c0c0c0;
  border-right: 0;
  box-sizing: border-box;
  height: 22px;
}
.wm { position: absolute; left: 0; top: 0; pointer-events: none; }
.wmt {
  font-family: "Liberation Sans", sans-serif;
  font-size: 24px;
  fill: rgba(255, 255, 255, 0.2);
}
</style>
